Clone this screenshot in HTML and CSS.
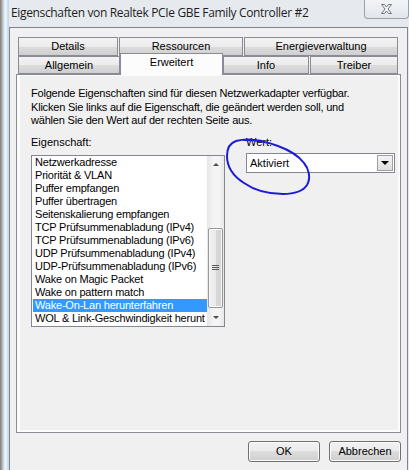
FILE: index.html
```html
<!DOCTYPE html>
<html>
	<head>
		<meta charset="utf-8">
		<title>Eigenschaften von Realtek PCIe GBE Family Controller #2</title>
		<link rel="stylesheet" href="styles.css">
	</head>
	<body>
		<div class="window">
			<!-- Rahmen links -->
			<div class="edge"></div>
			<div class="main">
				<div class="titlebar">
					<span class="caption">Eigenschaften von Realtek PCIe GBE Family Controller #2</span>
					<div class="closeBtn">
						<svg width="11" height="10" viewBox="0 0 11 10">
							<path d="M0.5 0.5 H3.5 L5.5 3 L7.5 0.5 H10.5 L7 5 L10.5 9.5 H7.5 L5.5 7 L3.5 9.5 H0.5 L4 5 Z" fill="#f4f5f7" stroke="#6d7580" stroke-width="1" stroke-linejoin="round"/>
						</svg>
					</div>
				</div>
				<div class="client">
					<!-- Registerkarten, zwei Reihen -->
					<div class="tabRow">
						<div class="tab w100">Details</div>
						<div class="tab w124">Ressourcen</div>
						<div class="tab w154">Energieverwaltung</div>
					</div>
					<div class="tabRow second">
						<div class="tab w102">Allgemein</div>
						<div class="tab w103 active">Erweitert</div>
						<div class="tab w86">Info</div>
						<div class="tab w88">Treiber</div>
					</div>
					<div class="panel">
						<div class="page">
							<p class="intro">
								Folgende Eigenschaften sind für diesen Netzwerkadapter verfügbar.<br>
								Klicken Sie links auf die Eigenschaft, die geändert werden soll, und<br>
								wählen Sie den Wert auf der rechten Seite aus.
							</p>
							<div class="fields">
								<div class="leftCol">
									<div class="label">Eigenschaft:</div>
									<div class="listBox">
										<ul>
											<li>Netzwerkadresse</li>
											<li>Priorität &amp; VLAN</li>
											<li>Puffer empfangen</li>
											<li>Puffer übertragen</li>
											<li>Seitenskalierung empfangen</li>
											<li>TCP Prüfsummenabladung (IPv4)</li>
											<li>TCP Prüfsummenabladung (IPv6)</li>
											<li>UDP Prüfsummenabladung (IPv4)</li>
											<li>UDP-Prüfsummenabladung (IPv6)</li>
											<li>Wake on Magic Packet</li>
											<li>Wake on pattern match</li>
											<li class="selected">Wake-On-Lan herunterfahren</li>
											<li>WOL &amp; Link-Geschwindigkeit herunt</li>
										</ul>
										<div class="scrollBar">
											<div class="arrow up"></div>
											<div class="track">
												<div class="thumb"><i></i><i></i><i></i></div>
											</div>
											<div class="arrow down"></div>
										</div>
									</div>
								</div>
								<div class="rightCol">
									<div class="label wert">Wert:</div>
									<div class="combo">
										<span>Aktiviert</span>
										<div class="dropBtn"></div>
									</div>
								</div>
							</div>
						</div>
					</div>
					<div class="buttons">
						<div class="btn">OK</div>
						<div class="btn">Abbrechen</div>
					</div>
				</div>
			</div>
			<!-- Markierung mit Stift um das Wert-Feld -->
			<svg class="scribble" width="409" height="470" viewBox="0 0 409 470">
				<path d="M262 141 C252 139 243 139 236 141 C230 143 227 149 227 156 C227 166 233 176 244 183 C254 190 268 194 283 194 C294 194 303 191 307 185 C311 178 309 169 304 163 C298 155 289 150 278 146 C268 142 256 140 244 140" fill="none" stroke="#1c1cd8" stroke-width="2" stroke-linecap="round"/>
			</svg>
		</div>
	</body>
</html>
```

FILE: styles.css
```css
* {
	margin: 0;
	padding: 0;
	box-sizing: border-box;
}
body {
	width: 409px;
	height: 470px;
	overflow: hidden;
	font-family: "Liberation Sans", Arial, sans-serif;
	font-size: 11px;
	color: #000;
	background: #e6eaef;
}
.window {
	width: 409px;
	height: 470px;
	display: flex;
	position: relative;
}
.edge {
	width: 9px;
	flex: none;
	background: linear-gradient(to right, #8a7a6a 0, #b8c6d4 3px, #d8e8f6 4px, #eef6fc 6px, #c8d8e8 8px);
}
.main {
	flex: 1;
	display: flex;
	flex-direction: column;
}
.titlebar {
	height: 27px;
	flex: none;
	display: flex;
	align-items: flex-start;
	background: #e6eaef;
}
.caption {
	font-family: "Open Sans", "Noto Sans", sans-serif;
	font-size: 12px;
	letter-spacing: -0.35px;
	padding: 4px 0 0 2px;
	color: #1e1e1e;
	white-space: nowrap;
}
.closeBtn {
	margin-left: auto;
	width: 45px;
	height: 19px;
	border: 1px solid #98a2ae;
	border-top: none;
	border-radius: 0 0 4px 4px;
	background: linear-gradient(#f2f4f7, #e2e6eb);
	display: flex;
	justify-content: center;
	align-items: center;
}
.client {
	flex: 1;
	width: 399px;
	background: #f0f0f0;
	border: 1px solid #7c8590;
	border-bottom: none;
	padding: 9px 6px 0 6px;
}
/* Registerkarten */
.tabRow {
	display: flex;
	gap: 1px;
	padding-left: 2px;
	height: 19px;
}
.tabRow.second {
	gap: 0;
	height: 18px;
	align-items: flex-end;
}
.tab {
	height: 19px;
	border: 1px solid #898c95;
	background: linear-gradient(#f3f3f3 0, #ebebeb 50%, #dddddd 51%, #cfcfcf 100%);
	text-align: center;
	line-height: 16px;
}
.second .tab {
	height: 18px;
}
.second .tab.w86 {
	margin-right: 1px;
}
.second .tab.active {
	height: 22px;
	margin-bottom: -1px;
	border-bottom: none;
	background: #fcfcfc;
	position: relative;
	z-index: 1;
	line-height: 16px;
}
.w100 { width: 100px; }
.w124 { width: 124px; }
.w154 { width: 154px; }
.w102 { width: 102px; }
.w103 { width: 103px; }
.w86 { width: 86px; }
.w88 { width: 88px; }
.panel {
	width: 385px;
	height: 359px;
	border: 1px solid #898c95;
	background: #fcfcfc;
	padding: 1px 2px 2px 3px;
}
.page {
	height: 100%;
	background: #f0f0f0;
	padding: 11px 0 0 11px;
}
.intro {
	line-height: 13.5px;
	white-space: nowrap;
	letter-spacing: -0.2px;
}
.fields {
	display: flex;
	gap: 21px;
	margin-top: 8px;
}
.label {
	line-height: 13px;
	margin-bottom: 6px;
}
.label.wert {
	margin-bottom: 4px;
}
/* Liste mit Bildlaufleiste */
.listBox {
	width: 194px;
	height: 172px;
	border: 1px solid #828790;
	background: #fff;
	display: flex;
}
.listBox ul {
	list-style: none;
	flex: 1;
	overflow: hidden;
	padding-left: 1px;
}
.listBox li {
	height: 13px;
	line-height: 13px;
	padding-left: 2px;
	white-space: nowrap;
	overflow: hidden;
	letter-spacing: -0.2px;
}
.listBox li.selected {
	background: #3399ff;
	color: #fff;
}
.scrollBar {
	width: 17px;
	flex: none;
	display: flex;
	flex-direction: column;
	background: linear-gradient(to right, #e6e6e6, #f4f4f4 40%, #f4f4f4 70%, #e8e8e8);
}
.arrow {
	height: 17px;
	flex: none;
	display: flex;
	justify-content: center;
	align-items: center;
}
.arrow::after {
	content: "";
	border-left: 3px solid transparent;
	border-right: 3px solid transparent;
}
.arrow.up::after {
	border-bottom: 3px solid #4d4d4d;
}
.arrow.down::after {
	border-top: 3px solid #4d4d4d;
}
.track {
	flex: 1;
	display: flex;
	flex-direction: column;
	justify-content: flex-end;
	padding: 0 1px 1px 1px;
}
.thumb {
	height: 80px;
	border: 1px solid #979797;
	border-radius: 2px;
	background: linear-gradient(to right, #f2f2f2, #eaeaea 50%, #d9d9d9 51%, #d3d3d3);
	box-shadow: inset 0 0 0 1px #f8f8f8;
	display: flex;
	flex-direction: column;
	justify-content: center;
	align-items: center;
	gap: 1px;
}
.thumb i {
	display: block;
	width: 7px;
	height: 1px;
	background: #5a5a5a;
}
/* Auswahlfeld */
.combo {
	width: 149px;
	height: 20px;
	border: 1px solid #828790;
	background: #fff;
	display: flex;
	align-items: center;
	padding: 0 1px 0 3px;
}
.combo span {
	flex: 1;
}
.dropBtn {
	width: 16px;
	height: 16px;
	border: 1px solid #a0a0a0;
	background: linear-gradient(#f4f4f4, #dedede);
	display: flex;
	justify-content: center;
	align-items: center;
}
.dropBtn::after {
	content: "";
	border-left: 4px solid transparent;
	border-right: 4px solid transparent;
	border-top: 4px solid #000;
}
/* OK / Abbrechen */
.buttons {
	display: flex;
	justify-content: flex-end;
	gap: 9px;
	margin-top: 8px;
}
.btn {
	width: 72px;
	height: 21px;
	border: 1px solid #707070;
	border-radius: 3px;
	background: linear-gradient(#f2f2f2 0, #ebebeb 45%, #dddddd 50%, #cfcfcf 100%);
	box-shadow: inset 0 0 0 1px #fcfcfc;
	text-align: center;
	line-height: 19px;
}
.scribble {
	position: absolute;
	left: 0;
	top: 0;
	pointer-events: none;
}
```
